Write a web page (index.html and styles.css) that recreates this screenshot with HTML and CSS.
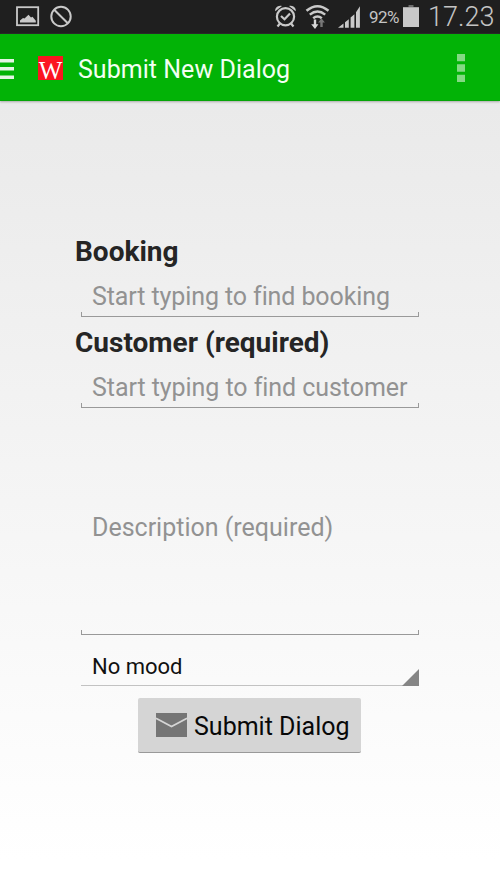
FILE: index.html
```html
<!DOCTYPE html>
<html lang="en">
<head>
<meta charset="utf-8">
<title>Submit New Dialog</title>
<link rel="stylesheet" href="styles.css">
</head>
<body>
<div class="status">
  <svg class="status-left" width="80" height="34" viewBox="0 0 80 34">
    <rect x="17" y="7.2" width="21.2" height="18" fill="none" stroke="#c9c9c9" stroke-width="1.8"/>
    <path d="M20 22.6V20.4l3-2.4 1.5.6 4-3.8 2.5 2.7 1.5-.8 3.3 4v1.9z" fill="#c9c9c9"/>
    <circle cx="61" cy="16.5" r="9.7" fill="none" stroke="#c9c9c9" stroke-width="2"/>
    <path d="M54.2 9.7l13.6 13.6" stroke="#c9c9c9" stroke-width="2"/>
  </svg>
  <svg class="status-icons" width="92" height="34" viewBox="272 0 92 34">
    <g fill="none" stroke="#c9c9c9" stroke-width="2.2">
      <circle cx="285.5" cy="16.7" r="8.6"/>
      <path d="M281 16l3.5 3.2 5.5-5.7"/>
      <path d="M280.2 23.3l-2.7 3.2M290.8 23.3l2.7 3.2"/>
    </g>
    <path d="M275.3 11.2c-.8-3.3 3.2-6.8 6.7-5.1zM295.7 11.2c.8-3.3-3.2-6.8-6.7-5.1z" fill="#c9c9c9"/>
    <g fill="none" stroke="#c9c9c9" stroke-width="2.5">
      <path d="M306.5 10.8q11-9.2 22 0M309.8 14.6q7.7-6.3 15.4 0M313.2 18.2q4.3-3.5 8.6 0"/>
    </g>
    <path d="M313.8 19.5h2.4v4.7h2.2L315 29l-3.8-4.8h2.6z" fill="#d8d8d8"/>
    <path d="M320.3 27v-4.6h-2.2l3.4-4.2 3.4 4.2h-2.2V27z" fill="#777"/>
    <path d="M338 27.7l5.5-4.3v4.3zM345 22.2l3.8-3v8.5H345zM350.6 17.6l3.8-3.4v13.5h-3.8zM356 12.3l3.9-6v21.4H356z" fill="#c9c9c9"/>
  </svg>
  <span class="percent">92%</span>
  <svg class="battery" width="18" height="34" viewBox="402 0 18 34">
    <path d="M408.5 5h5v2.3h-5z" fill="#6d6d6d"/><path d="M403 7.2h16V27h-16z" fill="#c9c9c9"/>
  </svg>
  <span class="clock">17.23</span>
</div>
<header class="bar">
  <svg class="menu" width="14" height="22" viewBox="0 0 14 22"><path d="M0 1h14v3.5H0zM0 9h14v3.5H0zM0 17.5h14V21H0z" fill="#e4f5e4"/></svg>
  <svg class="logo" width="25" height="24" viewBox="0 0 25 24"><path d="M0 0h25v24H0z" fill="#fb1520"/><text class="logo-letter" x="0.7" y="23">W</text></svg>
  <h1 class="title">Submit New Dialog</h1>
  <svg class="more" width="8" height="28" viewBox="0 0 8 28"><path d="M0 0h8v7.3H0zM0 10.3h8v7.4H0zM0 20.7h8V28H0z" fill="#84d984"/></svg>
</header>
<main class="form">
  <div class="label label-booking">Booking</div>
  <div class="field hint"><span class="t-booking">Start typing to find booking</span></div>
  <div class="label label-customer">Customer (required)</div>
  <div class="field hint"><span class="t-customer">Start typing to find customer</span></div>
  <div class="field area hint"><span class="t-desc">Description (required)</span></div>
  <div class="spinner"><span>No mood</span>
    <svg class="corner" width="17" height="17" viewBox="0 0 17 17"><path d="M17 0v17H0z" fill="#858585"/></svg>
  </div>
  <div class="submit">
    <svg width="31" height="24" viewBox="0 0 31 24"><path d="M0 0h31v24H0z" fill="#757575"/><path d="M0 5.2l15.5 8.3L31 5.2" fill="none" stroke="#d5d5d5" stroke-width="1.7"/></svg>
    <span>Submit Dialog</span>
  </div>
</main>
</body>
</html>
```
FILE: styles.css
```css
* { box-sizing: border-box; }
body {
  margin: 0;
  height: 889px;
  overflow: hidden;
  font-family: Roboto, "Liberation Sans", sans-serif;
  background: linear-gradient(#e8e8e8 34px, #ffffff 860px);
  white-space: nowrap;
}
svg { display: block; flex: none; }
.status {
  display: flex;
  height: 34px;
  background: #1f1f1f;
  color: #c4c4c4;
}
.status-icons { margin-left: 192px; }
.percent { width: 38px; padding-left: 5px; font-size: 17px; line-height: 34px; letter-spacing: -0.6px; }
.clock { padding-left: 8px; font-size: 27px; font-weight: 300; line-height: 34px; }
.bar {
  display: flex;
  align-items: center;
  height: 67px;
  background: #02b306;
  border-bottom: 1px solid #06a508;
  box-shadow: 0 1px 2px #aaa;
}
.menu { margin-top: 3px; }
.logo { margin: 2px 0 0 24px; }
.logo-letter { font: 25px "Liberation Serif", serif; fill: #fff; }
.title { margin: 5px 0 0 15px; width: 214px; font-size: 25px; font-weight: 400; line-height: 32px; letter-spacing: 0.03px; color: #f2fff2; }
.more { margin-left: 165px; margin-top: 2px; }
.form { padding: 135px 81px 0; }
.label { margin-left: -6px; font-size: 28px; font-weight: 700; line-height: 32px; color: #252525; }
.label-customer { margin-top: 10px; }
.field {
  height: 49px;
  padding: 13px 0 0 11px;
  border-bottom: 1px solid #999;
  background: linear-gradient(#999, #999) 0 100% / 1px 4px no-repeat, linear-gradient(#999, #999) 100% 100% / 1px 4px no-repeat;
}
.hint { font-size: 25px; line-height: 32px; color: #929292; }
.t-booking { letter-spacing: -0.1px; }
.t-customer { letter-spacing: -0.06px; }
.area { height: 227px; padding-top: 104px; }
.spinner {
  display: flex;
  height: 51px;
  padding: 16px 0 0 11px;
  justify-content: space-between;
  align-items: flex-start;
  border-bottom: 1px solid #c2c2c2;
  font-size: 22px;
  line-height: 32px;
  color: #111;
}
.corner { align-self: flex-end; margin-bottom: -1px; }
.submit {
  display: flex;
  align-items: center;
  width: 223px;
  height: 55px;
  margin: 12px 0 0 57px;
  padding-left: 18px;
  gap: 7px;
  border-radius: 2px;
  background: #d5d5d5;
  border-bottom: 1px solid #999;
  font-size: 25px;
  line-height: 32px;
  color: #080808;
}
.submit span { margin-top: 4px; }
```
